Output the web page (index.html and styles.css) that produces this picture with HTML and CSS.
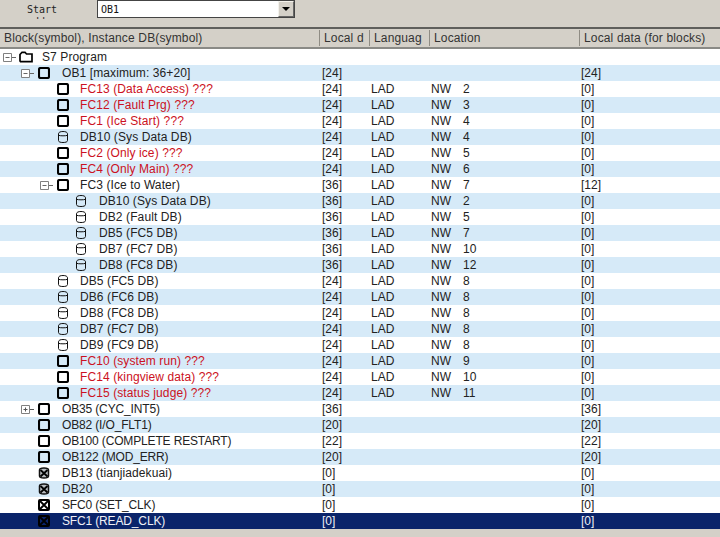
FILE: index.html
```html
<!DOCTYPE html>
<html lang="en">
<head>
<meta charset="utf-8">
<title>S7 Program</title>
<link rel="stylesheet" href="styles.css">
</head>
<body>
<svg class="defs" width="0" height="0">
  <symbol id="i-folder" viewBox="0 0 14 12"><path d="M1 10V3.500L3 1.300H6L7.500 3H13V10.700H1.500Z" fill="#fff" stroke="#000" stroke-width="1.700"/></symbol>
  <symbol id="i-block" viewBox="0 0 12 12"><rect x="1" y="1" width="10" height="10" rx="1.500" fill="none" stroke="#000" stroke-width="2.100"/></symbol>
  <symbol id="i-db" viewBox="0 0 12 12"><path d="M1.500 2.800C1.500 1.200 3.500.5 6 .5S10.500 1.200 10.500 2.800V9.500C10.500 11 8.500 11.500 6 11.500S1.500 11 1.500 9.500ZM1.500 4.300C3 5 9 5 10.500 4.300" fill="none" stroke="#111" stroke-width="1"/></symbol>
  <symbol id="i-xdb" viewBox="0 0 12 12"><path d="M1.500 3C1.500 1.500 3.500 1 6 1S10.500 1.500 10.500 3V9C10.500 10.500 8.500 11 6 11S1.500 10.500 1.500 9Z" fill="#b8bcc0" stroke="#111" stroke-width="1.500"/><path d="M2.500 3L9.500 9.500M9.500 3L2.500 9.500" stroke="#000" stroke-width="1.800"/></symbol>
  <symbol id="i-xblock" viewBox="0 0 12 12"><rect x="1" y="1" width="10" height="10" rx="1" fill="none" stroke="#000" stroke-width="2"/><path d="M2 2L10 10M10 2L2 10" stroke="#000" stroke-width="1.800"/></symbol>
  <symbol id="i-minus" viewBox="0 0 14 9"><path d="M.5.500H8.500V8.500H.5Z" fill="#fff" stroke="#808080"/><path d="M2.500 4.500H6.500M9 4.500H13" stroke="#666"/></symbol>
  <symbol id="i-plus" viewBox="0 0 14 9"><path d="M.5.500H8.500V8.500H.5Z" fill="#fff" stroke="#808080"/><path d="M2.500 4.500H6.500M4.500 2.500V6.500M9 4.500H13" stroke="#555"/></symbol>
</svg>
<div class="toolbar">
  <div class="start-label">Start address</div>
  <div class="combo"><span class="combo-text">OB1</span><span class="combo-btn"><span class="arrow"></span></span></div>
</div>
<div class="header">
  <div class="hcell">Block(symbol), Instance DB(symbol)</div>
  <div class="hcell">Local d</div>
  <div class="hcell">Languag</div>
  <div class="hcell">Location</div>
  <div class="hcell last">Local data (for blocks)</div>
</div>
<div class="rows">
  <div class="row l0"><div class="name"><svg class="tog"><use href="#i-minus"/></svg><svg class="ic folder"><use href="#i-folder"/></svg><span class="t">S7 Program</span></div><div></div><div></div><div></div><div></div><div></div></div>
  <div class="row l1"><div class="name"><svg class="tog"><use href="#i-minus"/></svg><svg class="ic"><use href="#i-block"/></svg><span class="t">OB1 [maximum: 36+20]</span></div><div class="v">[24]</div><div></div><div></div><div></div><div class="v">[24]</div></div>
  <div class="row l2 bad"><div class="name"><svg class="ic"><use href="#i-block"/></svg><span class="t">FC13 (Data Access) ???</span></div><div class="v">[24]</div><div class="v">LAD</div><div class="v">NW</div><div class="v">2</div><div class="v">[0]</div></div>
  <div class="row l2 bad"><div class="name"><svg class="ic"><use href="#i-block"/></svg><span class="t">FC12 (Fault Prg) ???</span></div><div class="v">[24]</div><div class="v">LAD</div><div class="v">NW</div><div class="v">3</div><div class="v">[0]</div></div>
  <div class="row l2 bad"><div class="name"><svg class="ic"><use href="#i-block"/></svg><span class="t">FC1 (Ice Start) ???</span></div><div class="v">[24]</div><div class="v">LAD</div><div class="v">NW</div><div class="v">4</div><div class="v">[0]</div></div>
  <div class="row l2"><div class="name"><svg class="ic"><use href="#i-db"/></svg><span class="t">DB10 (Sys Data DB)</span></div><div class="v">[24]</div><div class="v">LAD</div><div class="v">NW</div><div class="v">4</div><div class="v">[0]</div></div>
  <div class="row l2 bad"><div class="name"><svg class="ic"><use href="#i-block"/></svg><span class="t">FC2 (Only ice) ???</span></div><div class="v">[24]</div><div class="v">LAD</div><div class="v">NW</div><div class="v">5</div><div class="v">[0]</div></div>
  <div class="row l2 bad"><div class="name"><svg class="ic"><use href="#i-block"/></svg><span class="t">FC4 (Only Main) ???</span></div><div class="v">[24]</div><div class="v">LAD</div><div class="v">NW</div><div class="v">6</div><div class="v">[0]</div></div>
  <div class="row l2t"><div class="name"><svg class="tog"><use href="#i-minus"/></svg><svg class="ic"><use href="#i-block"/></svg><span class="t">FC3 (Ice to Water)</span></div><div class="v">[36]</div><div class="v">LAD</div><div class="v">NW</div><div class="v">7</div><div class="v">[12]</div></div>
  <div class="row l3"><div class="name"><svg class="ic"><use href="#i-db"/></svg><span class="t">DB10 (Sys Data DB)</span></div><div class="v">[36]</div><div class="v">LAD</div><div class="v">NW</div><div class="v">2</div><div class="v">[0]</div></div>
  <div class="row l3"><div class="name"><svg class="ic"><use href="#i-db"/></svg><span class="t">DB2 (Fault DB)</span></div><div class="v">[36]</div><div class="v">LAD</div><div class="v">NW</div><div class="v">5</div><div class="v">[0]</div></div>
  <div class="row l3"><div class="name"><svg class="ic"><use href="#i-db"/></svg><span class="t">DB5 (FC5 DB)</span></div><div class="v">[36]</div><div class="v">LAD</div><div class="v">NW</div><div class="v">7</div><div class="v">[0]</div></div>
  <div class="row l3"><div class="name"><svg class="ic"><use href="#i-db"/></svg><span class="t">DB7 (FC7 DB)</span></div><div class="v">[36]</div><div class="v">LAD</div><div class="v">NW</div><div class="v">10</div><div class="v">[0]</div></div>
  <div class="row l3"><div class="name"><svg class="ic"><use href="#i-db"/></svg><span class="t">DB8 (FC8 DB)</span></div><div class="v">[36]</div><div class="v">LAD</div><div class="v">NW</div><div class="v">12</div><div class="v">[0]</div></div>
  <div class="row l2"><div class="name"><svg class="ic"><use href="#i-db"/></svg><span class="t">DB5 (FC5 DB)</span></div><div class="v">[24]</div><div class="v">LAD</div><div class="v">NW</div><div class="v">8</div><div class="v">[0]</div></div>
  <div class="row l2"><div class="name"><svg class="ic"><use href="#i-db"/></svg><span class="t">DB6 (FC6 DB)</span></div><div class="v">[24]</div><div class="v">LAD</div><div class="v">NW</div><div class="v">8</div><div class="v">[0]</div></div>
  <div class="row l2"><div class="name"><svg class="ic"><use href="#i-db"/></svg><span class="t">DB8 (FC8 DB)</span></div><div class="v">[24]</div><div class="v">LAD</div><div class="v">NW</div><div class="v">8</div><div class="v">[0]</div></div>
  <div class="row l2"><div class="name"><svg class="ic"><use href="#i-db"/></svg><span class="t">DB7 (FC7 DB)</span></div><div class="v">[24]</div><div class="v">LAD</div><div class="v">NW</div><div class="v">8</div><div class="v">[0]</div></div>
  <div class="row l2"><div class="name"><svg class="ic"><use href="#i-db"/></svg><span class="t">DB9 (FC9 DB)</span></div><div class="v">[24]</div><div class="v">LAD</div><div class="v">NW</div><div class="v">8</div><div class="v">[0]</div></div>
  <div class="row l2 bad"><div class="name"><svg class="ic"><use href="#i-block"/></svg><span class="t">FC10 (system run) ???</span></div><div class="v">[24]</div><div class="v">LAD</div><div class="v">NW</div><div class="v">9</div><div class="v">[0]</div></div>
  <div class="row l2 bad"><div class="name"><svg class="ic"><use href="#i-block"/></svg><span class="t">FC14 (kingview data) ???</span></div><div class="v">[24]</div><div class="v">LAD</div><div class="v">NW</div><div class="v">10</div><div class="v">[0]</div></div>
  <div class="row l2 bad"><div class="name"><svg class="ic"><use href="#i-block"/></svg><span class="t">FC15 (status judge) ???</span></div><div class="v">[24]</div><div class="v">LAD</div><div class="v">NW</div><div class="v">11</div><div class="v">[0]</div></div>
  <div class="row l1"><div class="name"><svg class="tog"><use href="#i-plus"/></svg><svg class="ic"><use href="#i-block"/></svg><span class="t caps">OB35 (CYC_INT5)</span></div><div class="v">[36]</div><div></div><div></div><div></div><div class="v">[36]</div></div>
  <div class="row l1n"><div class="name"><svg class="ic"><use href="#i-block"/></svg><span class="t caps">OB82 (I/O_FLT1)</span></div><div class="v">[20]</div><div></div><div></div><div></div><div class="v">[20]</div></div>
  <div class="row l1n"><div class="name"><svg class="ic"><use href="#i-block"/></svg><span class="t caps">OB100 (COMPLETE RESTART)</span></div><div class="v">[22]</div><div></div><div></div><div></div><div class="v">[22]</div></div>
  <div class="row l1n"><div class="name"><svg class="ic"><use href="#i-block"/></svg><span class="t caps">OB122 (MOD_ERR)</span></div><div class="v">[20]</div><div></div><div></div><div></div><div class="v">[20]</div></div>
  <div class="row l1n"><div class="name"><svg class="ic"><use href="#i-xdb"/></svg><span class="t">DB13 (tianjiadekuai)</span></div><div class="v">[0]</div><div></div><div></div><div></div><div class="v">[0]</div></div>
  <div class="row l1n"><div class="name"><svg class="ic"><use href="#i-xdb"/></svg><span class="t">DB20</span></div><div class="v">[0]</div><div></div><div></div><div></div><div class="v">[0]</div></div>
  <div class="row l1n"><div class="name"><svg class="ic"><use href="#i-xblock"/></svg><span class="t caps">SFC0 (SET_CLK)</span></div><div class="v">[0]</div><div></div><div></div><div></div><div class="v">[0]</div></div>
  <div class="row l1n sel"><div class="name"><svg class="ic"><use href="#i-xblock"/></svg><span class="t caps">SFC1 (READ_CLK)</span></div><div class="v">[0]</div><div></div><div></div><div></div><div class="v">[0]</div></div>
</div>
<div class="statusbar"></div>
</body>
</html>
```

FILE: styles.css
```css
* { box-sizing: border-box; }
html, body { margin: 0; padding: 0; }
body {
  width: 720px;
  height: 537px;
  overflow: hidden;
  background: #fff;
  font-family: "Liberation Sans", Arial, sans-serif;
  font-size: 12px;
  color: #222;
  display: flex;
  flex-direction: column;
}
.defs { position: absolute; }
.toolbar {
  height: 29px;
  flex: none;
  background: #d4d0c8;
  border-bottom: 2px solid #5f5f5c;
  display: flex;
  align-items: flex-start;
  overflow: hidden;
}
.start-label {
  width: 97px;
  height: 19px;
  overflow: hidden;
  padding: 4px 30px 0 27px;
  font-family: "DejaVu Sans Mono", monospace;
  font-size: 10px;
  line-height: 12px;
  color: #222;
}
.combo {
  width: 198px;
  height: 18px;
  background: #fff;
  border: 1px solid #444;
  display: flex;
  justify-content: space-between;
  align-items: center;
}
.combo-text {
  padding-left: 3px;
  font-family: "DejaVu Sans Mono", monospace;
  font-size: 10px;
  color: #111;
}
.combo-btn {
  width: 16px;
  height: 16px;
  background: #d4d0c8;
  border: 1px solid;
  border-color: #f4f2ec #666 #666 #f4f2ec;
  display: flex;
  align-items: center;
  justify-content: center;
}
.arrow {
  border-left: 4px solid transparent;
  border-right: 4px solid transparent;
  border-top: 4px solid #000;
}
.header {
  height: 20px;
  flex: none;
  display: grid;
  grid-template-columns: 320px 50px 60px 150px 1fr;
  background: #d4d0c8;
  border-bottom: 2px solid #8a8a86;
  color: #333;
  letter-spacing: .15px;
}
.hcell {
  padding-left: 4px;
  border-right: 1px solid #8f8c84;
  margin: 1px 0;
  line-height: 17px;
  white-space: nowrap;
  overflow: hidden;
}
.hcell.last { border-right: 0; }
.rows { flex: none; }
.row {
  height: 16px;
  display: grid;
  grid-template-columns: 322px 49px 60px 32px 118px 1fr;
  align-items: center;
  line-height: 16px;
  white-space: nowrap;
}
.row:nth-child(even) { background: #d6eaf8; }
.name { display: flex; align-items: center; height: 16px; }
.t { letter-spacing: .1px; }
.t.caps { letter-spacing: -.15px; }
.tog { width: 14px; height: 9px; flex: none; margin-right: 3px; }
.ic { width: 12px; height: 12px; flex: none; margin-right: 11px; }
.folder { width: 14px; margin-right: 9px; }
.row.l0 > .name { padding-left: 3px; }
.row.l0 .tog { margin-right: 2px; }
.row.l1 > .name { padding-left: 21px; }
.row.l1 .ic { margin-right: 12px; }
.row.l1n > .name { padding-left: 38px; }
.row.l1n .ic { margin-right: 12px; }
.row.l2 > .name { padding-left: 57px; }
.row.l2t > .name { padding-left: 40px; }
.row.l3 > .name { padding-left: 75px; }
.row.l3 .ic { margin-right: 12px; }
.bad .t { color: #cc1122; }
.sel, .sel:nth-child(even) { background: #0a246a; color: #f0f0f6; }
.statusbar { flex: 1; background: #d4d0c8; }
```
